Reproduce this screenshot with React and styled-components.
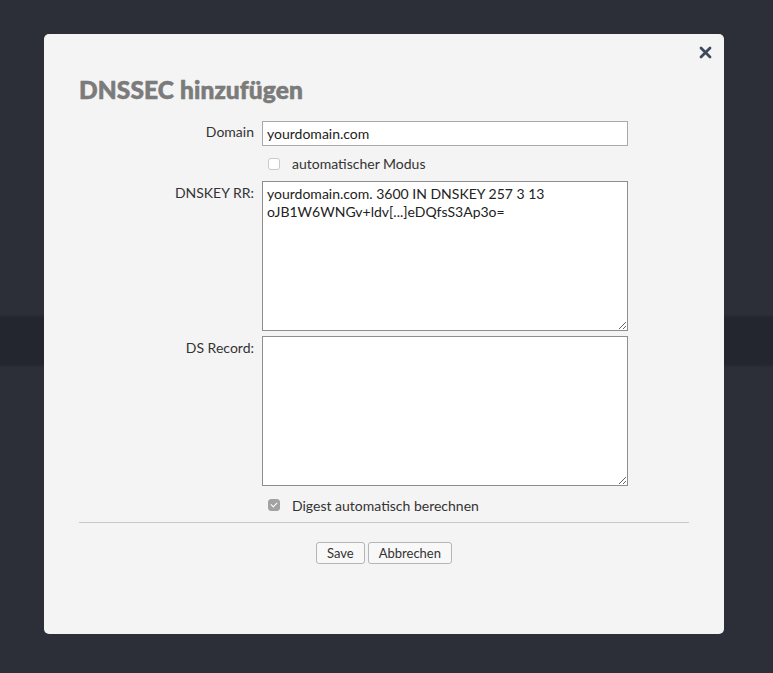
import React from 'react';
import styled, { createGlobalStyle } from 'styled-components';

const GlobalStyle = createGlobalStyle`
  html, body {
    margin: 0;
    padding: 0;
    height: 100%;
  }
  body {
    font-family: Lato, "Liberation Sans", sans-serif;
    background: #2d2f38;
  }
`;

const Backdrop = styled.div`
  min-height: 673px;
  padding-top: 34px;
  box-sizing: border-box;
  background: linear-gradient(
    to bottom,
    #2d2f38 0,
    #2d2f38 314px,
    #24262f 318px,
    #24262f 364px,
    #2d2f38 368px,
    #2d2f38 100%
  );
`;

const Modal = styled.div`
  width: 680px;
  height: 600px;
  margin: 0 0 0 44px;
  box-sizing: border-box;
  padding: 10px 35px 0;
  background: #f4f4f4;
  border-radius: 5px;
  display: flex;
  flex-direction: column;
`;

const CloseRow = styled.div`
  display: flex;
  justify-content: flex-end;
  margin-right: -24px;
`;

const CloseButton = styled.button`
  border: 0;
  background: none;
  padding: 0;
  width: 16px;
  height: 16px;
  display: flex;
  align-items: center;
  justify-content: center;
  cursor: pointer;
`;

const Title = styled.h2`
  margin: 15px 0 0;
  font-family: Lato, "Liberation Sans", sans-serif;
  font-weight: 900;
  font-size: 24.5px;
  line-height: 30px;
  color: #7b7b7b;
  -webkit-text-stroke: 0.6px #7b7b7b;
  letter-spacing: 0.1px;
`;

const Form = styled.form`
  display: grid;
  grid-template-columns: 175px 366px;
  column-gap: 8px;
  row-gap: 5px;
  margin-top: 16px;
`;

const Label = styled.label`
  text-align: right;
  font-size: 14px;
  color: #333;
  line-height: 18px;
  padding-top: ${p => p.$top || 3}px;
`;

const TextInput = styled.input`
  box-sizing: border-box;
  width: 366px;
  height: 25px;
  border: 1px solid #a9a9a9;
  background: #fff;
  font-family: Lato, "Liberation Sans", sans-serif;
  font-size: 14px;
  color: #222;
  padding: 0 4px;
  outline: none;
`;

const TextArea = styled.textarea`
  box-sizing: border-box;
  width: 366px;
  height: 150px;
  border: 1px solid #8e8e8e;
  background: #fff;
  font-family: Lato, "Liberation Sans", sans-serif;
  font-size: 14px;
  line-height: 18px;
  color: #222;
  padding: 3px 4px;
  outline: none;
  resize: both;
  display: block;
`;

const CheckRow = styled.label`
  display: flex;
  align-items: center;
  gap: 12px;
  font-size: 14px;
  color: #333;
  padding-left: 6px;
  height: ${p => p.$h || 24}px;
`;

const Box = styled.input`
  appearance: none;
  margin: 0;
  width: 12px;
  height: 12px;
  border-radius: 3px;
  border: 1px solid #c9c9c9;
  background: #fff;
  display: grid;
  place-content: center;
  &:checked {
    background: #a2a2a2;
    border-color: #a2a2a2;
  }
  &:checked::after {
    content: '';
    width: 5px;
    height: 3px;
    border-left: 1.5px solid #fff;
    border-bottom: 1.5px solid #fff;
    transform: translateY(-1px) rotate(-45deg);
  }
`;

const Divider = styled.hr`
  border: 0;
  border-top: 1px solid #c8c8c8;
  margin: 3px 0 0;
  width: 610px;
`;

const Buttons = styled.div`
  display: flex;
  justify-content: center;
  gap: 3px;
  margin-top: 19px;
`;

const Button = styled.button`
  font-family: Lato, "Liberation Sans", sans-serif;
  font-size: 13px;
  color: #333;
  background: #f8f8f8;
  border: 1px solid #b5b5b5;
  border-radius: 3px;
  height: 22px;
  padding: 0 10px;
  cursor: pointer;
`;

const Empty = styled.div``;

export default function App() {
  return (
    <>
      <GlobalStyle />
      <Backdrop>
        <Modal>
          <CloseRow>
            <CloseButton aria-label="close">
              <svg width="13" height="13" viewBox="0 0 13 13">
                <path d="M2 2 L11 11 M11 2 L2 11" stroke="#3e4a5c" strokeWidth="2.8" strokeLinecap="round" />
              </svg>
            </CloseButton>
          </CloseRow>
          <Title>DNSSEC hinzufügen</Title>
          <Form>
            <Label $top={2}>Domain</Label>
            <TextInput defaultValue="yourdomain.com" />

            <Empty />
            <CheckRow $h={25}>
              <Box type="checkbox" />
              automatischer Modus
            </CheckRow>

            <Label>DNSKEY RR:</Label>
            <TextArea defaultValue={'yourdomain.com. 3600 IN DNSKEY 257 3 13\noJB1W6WNGv+ldv[...]eDQfsS3Ap3o='} />

            <Label>DS Record:</Label>
            <TextArea />

            <Empty />
            <CheckRow $h={28}>
              <Box type="checkbox" defaultChecked />
              Digest automatisch berechnen
            </CheckRow>
          </Form>
          <Divider />
          <Buttons>
            <Button>Save</Button>
            <Button>Abbrechen</Button>
          </Buttons>
        </Modal>
      </Backdrop>
    </>
  );
}
